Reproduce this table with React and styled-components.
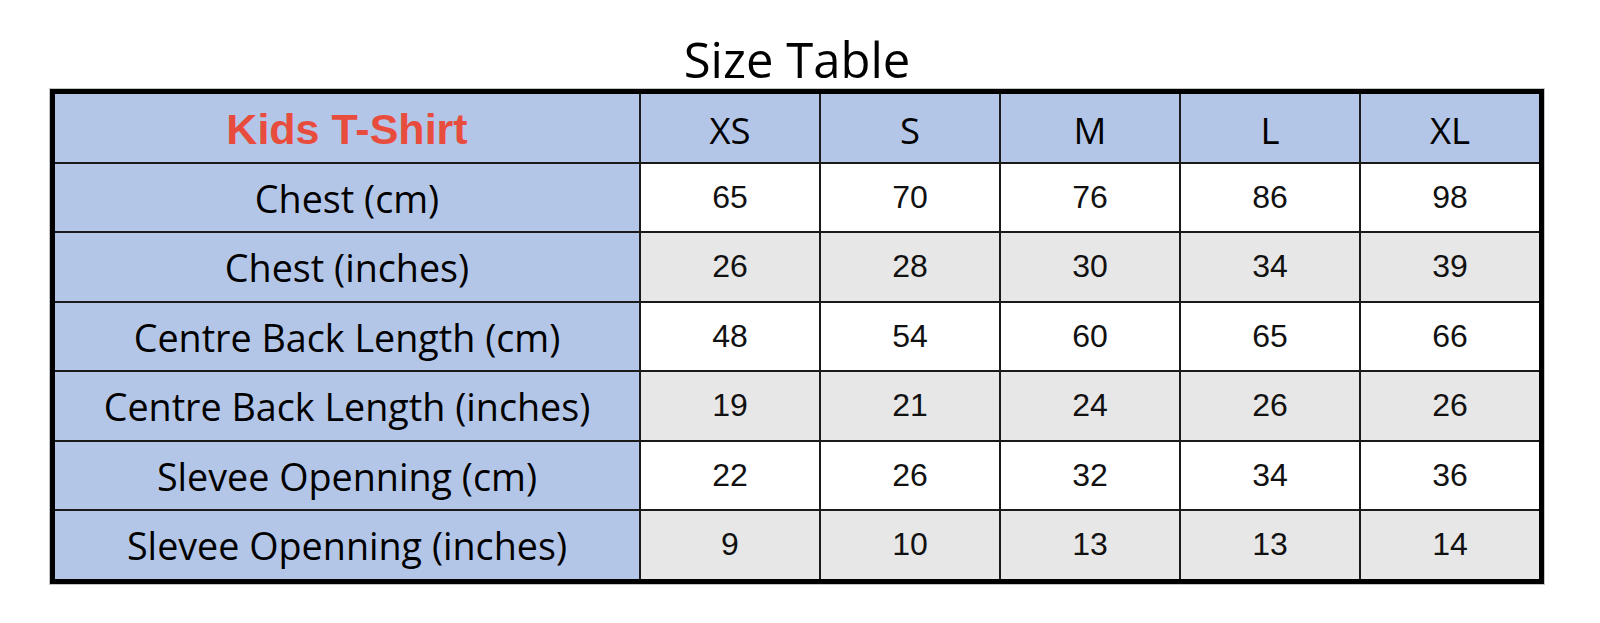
import React from "react";
import styled, { createGlobalStyle } from "styled-components";

const GlobalStyle = createGlobalStyle`
  html, body {
    margin: 0;
    padding: 0;
    background: #ffffff;
  }
  body {
    font-family: "Open Sans", "Liberation Sans", sans-serif;
    color: #000;
  }
`;

const Page = styled.div`
  width: 1600px;
  height: 623px;
  box-sizing: border-box;
  padding: 35px 0 0 50px;
  background: #fff;
`;

const Sheet = styled.div`
  width: 1494px;
  display: flex;
  flex-direction: column;
  align-items: stretch;
`;

const Title = styled.h1`
  margin: 0 0 5px;
  font-family: "Open Sans", sans-serif;
  font-weight: 400;
  font-size: 49px;
  line-height: 49px;
  text-align: center;
  color: #000;
`;

const Grid = styled.div`
  display: grid;
  grid-template-columns: 584px repeat(5, 178px);
  grid-auto-rows: 67.5px;
  gap: 2px;
  background: #1a1a1a;
  border: 5px solid #000;
  box-shadow: 0 0 0 1px #c4c4c4;
`;

const Cell = styled.div`
  display: flex;
  align-items: center;
  justify-content: center;
  box-sizing: border-box;
  padding-top: ${(p) => p.$shift || 0}px;
  background: ${(p) =>
    p.$tone === "blue" ? "#b4c6e7" : p.$tone === "gray" ? "#e7e7e7" : "#ffffff"};
  color: #000;
  white-space: nowrap;
`;

const Brand = styled(Cell)`
  font-family: "Liberation Sans", Arial, sans-serif;
  font-weight: 700;
  font-size: 43px;
  color: #e84c3d;
`;

const SizeHead = styled(Cell)`
  font-family: "Open Sans", sans-serif;
  font-size: 36.5px;
`;

const Label = styled(Cell)`
  font-family: "Open Sans", sans-serif;
  font-size: 37.7px;
`;

const Value = styled(Cell)`
  font-family: "Liberation Sans", Arial, sans-serif;
  font-size: 32px;
  color: #111;
`;

const sizes = ["XS", "S", "M", "L", "XL"];

const rows = [
  { label: "Chest (cm)", values: [65, 70, 76, 86, 98] },
  { label: "Chest (inches)", values: [26, 28, 30, 34, 39] },
  { label: "Centre Back Length (cm)", values: [48, 54, 60, 65, 66] },
  { label: "Centre Back Length (inches)", values: [19, 21, 24, 26, 26] },
  { label: "Slevee Openning (cm)", values: [22, 26, 32, 34, 36] },
  { label: "Slevee Openning (inches)", values: [9, 10, 13, 13, 14] },
];

export default function App() {
  return (
    <>
      <GlobalStyle />
      <Page>
        <Sheet>
          <Title>Size Table</Title>
          <Grid>
            <Brand $tone="blue" $shift={4}>
              Kids T-Shirt
            </Brand>
            {sizes.map((s) => (
              <SizeHead key={s} $tone="blue" $shift={4}>
                {s}
              </SizeHead>
            ))}
            {rows.map((r, i) => (
              <React.Fragment key={r.label}>
                <Label $tone="blue" $shift={2}>
                  {r.label}
                </Label>
                {r.values.map((v, j) => (
                  <Value key={j} $tone={i % 2 === 1 ? "gray" : "white"}>
                    {v}
                  </Value>
                ))}
              </React.Fragment>
            ))}
          </Grid>
        </Sheet>
      </Page>
    </>
  );
}
